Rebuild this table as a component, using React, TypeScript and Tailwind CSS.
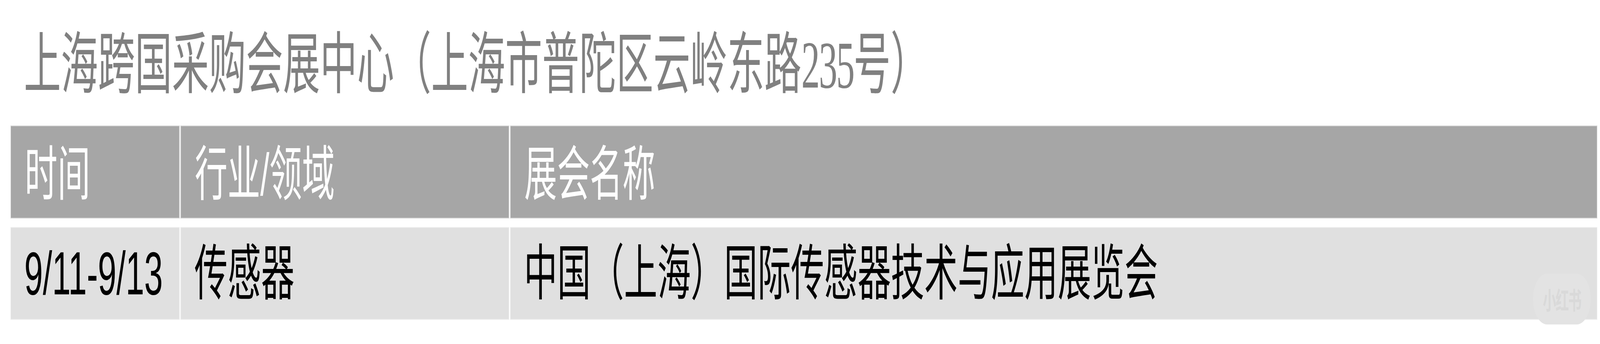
import { useEffect, useState } from "react";

const DESIGN_WIDTH = 7433;

const headers = ["时间", "行业/领域", "展会名称"];
const row = ["9/11-9/13", "传感器", "中国（上海）国际传感器技术与应用展览会"];

export default function App() {
  // the sheet is drawn at 7433px wide; squeeze it to whatever width the window really has
  const [scale, setScale] = useState(() => window.innerWidth / DESIGN_WIDTH);

  useEffect(() => {
    const onResize = () => setScale(window.innerWidth / DESIGN_WIDTH);
    window.addEventListener("resize", onResize);
    return () => window.removeEventListener("resize", onResize);
  }, []);

  return (
    <div className="w-full h-[880px] overflow-hidden bg-white">
      <div
        className="w-[7433px] h-[880px] origin-top-left bg-white pl-[49px] pr-[13px] font-['Liberation_Sans','Noto_Sans_CJK_SC',sans-serif]"
        style={{ transform: `scaleX(${scale})` }}
      >
        <h1 className="pt-[80px] ml-[62px] h-[252px] text-[172px] leading-[172px] text-[#808080] font-normal whitespace-nowrap font-['Liberation_Serif','Noto_Sans_CJK_SC',serif]">
          上海跨国采购会展中心（上海市普陀区云岭东路<span className="tracking-[-0.03em]">235</span>号）
        </h1>

        <div className="mt-[69px] grid grid-cols-[785px_1526px_1fr] gap-x-[5px] gap-y-[22px]">
          {headers.map((h) => (
            <div
              key={h}
              className="h-[238px] flex items-center pl-[64px] pt-[12px] border-2 border-[#d6d6d6] bg-[#a6a6a6] text-white text-[152px] leading-none whitespace-nowrap"
            >
              {h}
            </div>
          ))}
          {row.map((c, i) => (
            <div
              key={c}
              className="relative h-[237px] flex items-center pl-[62px] border-2 border-[#ececec] bg-[#e0e0e0] text-black text-[155px] leading-none whitespace-nowrap"
            >
              {c}
              {i === 2 && (
                <div className="absolute right-[28px] top-[117px] w-[268px] h-[130px] rounded-full bg-[#e3e3e3] flex items-center justify-center">
                  <span className="text-[62px] font-bold tracking-tighter text-[#d9d9d9] font-['Noto_Sans_CJK_SC',sans-serif]">
                    小红书
                  </span>
                </div>
              )}
            </div>
          ))}
        </div>
      </div>
    </div>
  );
}
